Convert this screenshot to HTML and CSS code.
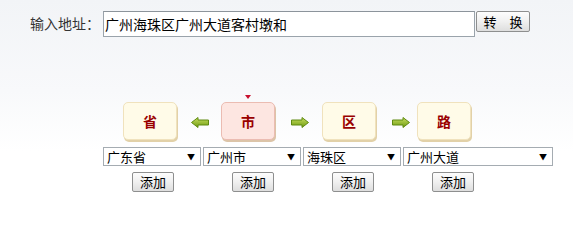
FILE: index.html
```html
<!DOCTYPE html>
<html lang="zh-CN">
<head>
<meta charset="utf-8">
<title>地址转换</title>
<link rel="stylesheet" href="styles.css">
</head>
<body>
<div class="page">
  <div class="top">
    <label class="lbl" for="addr">输入地址：</label>
    <input id="addr" class="addr" type="text" value="广州海珠区广州大道客村墩和">
    <button class="btn btn-conv" type="button">转　换</button>
  </div>

  <div class="flow">
    <div class="box">省</div>
    <div class="arr">
      <svg width="18" height="11" viewBox="0 0 18 11"><defs><linearGradient id="g1" x1="0" y1="0" x2="0" y2="1"><stop offset="0" stop-color="#c8e060"/><stop offset="1" stop-color="#6f9a12"/></linearGradient></defs><polygon points="0.5,5.5 7,0.5 7,3 17.5,3 17.5,8 7,8 7,10.5" fill="url(#g1)" stroke="#5f8a10" stroke-width="1"/></svg>
    </div>
    <div class="box box-on"><span class="mark"></span>市</div>
    <div class="arr arr-b">
      <svg width="18" height="11" viewBox="0 0 18 11"><defs><linearGradient id="g2" x1="0" y1="0" x2="0" y2="1"><stop offset="0" stop-color="#c8e060"/><stop offset="1" stop-color="#6f9a12"/></linearGradient></defs><polygon points="17.5,5.5 11,0.5 11,3 0.5,3 0.5,8 11,8 11,10.5" fill="url(#g2)" stroke="#5f8a10" stroke-width="1"/></svg>
    </div>
    <div class="box">区</div>
    <div class="arr arr-c">
      <svg width="18" height="11" viewBox="0 0 18 11"><defs><linearGradient id="g3" x1="0" y1="0" x2="0" y2="1"><stop offset="0" stop-color="#c8e060"/><stop offset="1" stop-color="#6f9a12"/></linearGradient></defs><polygon points="17.5,5.5 11,0.5 11,3 0.5,3 0.5,8 11,8 11,10.5" fill="url(#g3)" stroke="#5f8a10" stroke-width="1"/></svg>
    </div>
    <div class="box">路</div>
  </div>

  <div class="sels">
    <div class="sel"><select><option>广东省</option></select><span class="tri">▼</span></div>
    <div class="sel"><select><option>广州市</option></select><span class="tri">▼</span></div>
    <div class="sel"><select><option>海珠区</option></select><span class="tri">▼</span></div>
    <div class="sel sel-wide"><select><option>广州大道</option></select><span class="tri">▼</span></div>
  </div>

  <div class="adds">
    <div class="cell"><button class="btn btn-add" type="button">添加</button></div>
    <div class="cell"><button class="btn btn-add" type="button">添加</button></div>
    <div class="cell"><button class="btn btn-add" type="button">添加</button></div>
    <div class="cell"><button class="btn btn-add" type="button">添加</button></div>
  </div>
</div>
</body>
</html>
```

FILE: styles.css
```css
html {
  min-height: 100%;
  background: #ffffff;
}
body {
  margin: 0;
  padding: 0;
  font-family: "Noto Sans CJK SC", "Liberation Sans", sans-serif;
  color: #000;
}
.page {
  position: relative;
  height: 202px;
  background: linear-gradient(180deg, #f2f4f7 0%, #f8f9fb 45%, #ffffff 75%);
}
.top {
  display: flex;
  align-items: flex-start;
  padding: 11px 0 0 30px;
  height: 26px;
}
.lbl {
  width: 73px;
  font-size: 14px;
  line-height: 24px;
  color: #333;
}
.addr {
  box-sizing: border-box;
  width: 372px;
  height: 26px;
  margin: 0;
  padding: 0 1px;
  border: 1px solid #9aa3ab;
  border-top-color: #8c949b;
  background: #fff;
  font-family: inherit;
  font-size: 14px;
  color: #000;
  outline: none;
}
.btn {
  box-sizing: border-box;
  margin: 0;
  padding: 0;
  border: 1px solid #8e8f8f;
  border-radius: 2px;
  background: linear-gradient(180deg, #fdfdfd 0%, #f0f0f0 50%, #dedede 100%);
  font-family: inherit;
  color: #000;
  cursor: pointer;
}
.btn-conv {
  width: 54px;
  height: 21px;
  margin-left: 1px;
  font-size: 13px;
  line-height: 19px;
}
.flow {
  display: grid;
  grid-template-columns: 55px 43px 55px 46px 55px 40px 56px;
  align-items: center;
  margin-top: 65px;
  padding-left: 123px;
}
.box {
  position: relative;
  box-sizing: border-box;
  width: 54px;
  height: 38px;
  border: 1px solid #f0e2bd;
  border-radius: 5px;
  background: #fffbe8;
  box-shadow: 1px 2px 0 #e2d1a8;
  color: #990000;
  font-size: 14px;
  font-weight: bold;
  line-height: 36px;
  text-align: center;
}
.box-on {
  background: #fde6e1;
  border-color: #ebbcb2;
  box-shadow: 1px 2px 0 #dcc4a8;
}
.mark {
  position: absolute;
  left: 23px;
  top: -8px;
  width: 0;
  height: 0;
  border-left: 3px solid transparent;
  border-right: 3px solid transparent;
  border-top: 4px solid #c8102e;
}
.arr {
  display: flex;
  justify-content: center;
  align-items: center;
  height: 11px;
  padding-top: 2px;
}
.arr svg {
  display: block;
}
.arr-b {
  padding-left: 2px;
}
.arr-c {
  padding-left: 8px;
}
.sels {
  display: grid;
  grid-template-columns: 100px 100px 100px 150px;
  margin-top: 7px;
  padding-left: 103px;
}
.sel {
  box-sizing: border-box;
  display: flex;
  align-items: center;
  width: 98px;
  height: 19px;
  border: 1px solid #a5acb2;
  background: #fff;
}
.sel-wide {
  width: 150px;
}
.sel select {
  flex: 1;
  min-width: 0;
  height: 17px;
  margin: 0;
  padding: 0 0 0 3px;
  border: 0;
  background: transparent;
  -webkit-appearance: none;
  appearance: none;
  font-family: inherit;
  font-size: 13px;
  line-height: 17px;
  color: #000;
  outline: none;
}
.tri {
  flex: none;
  padding-right: 5px;
  font-size: 8px;
  line-height: 17px;
  color: #000;
}
.adds {
  display: grid;
  grid-template-columns: repeat(4, 100px);
  margin-top: 6px;
  padding-left: 103px;
}
.cell {
  display: flex;
  justify-content: center;
}
.btn-add {
  width: 42px;
  height: 20px;
  font-size: 13px;
  line-height: 18px;
}
```
